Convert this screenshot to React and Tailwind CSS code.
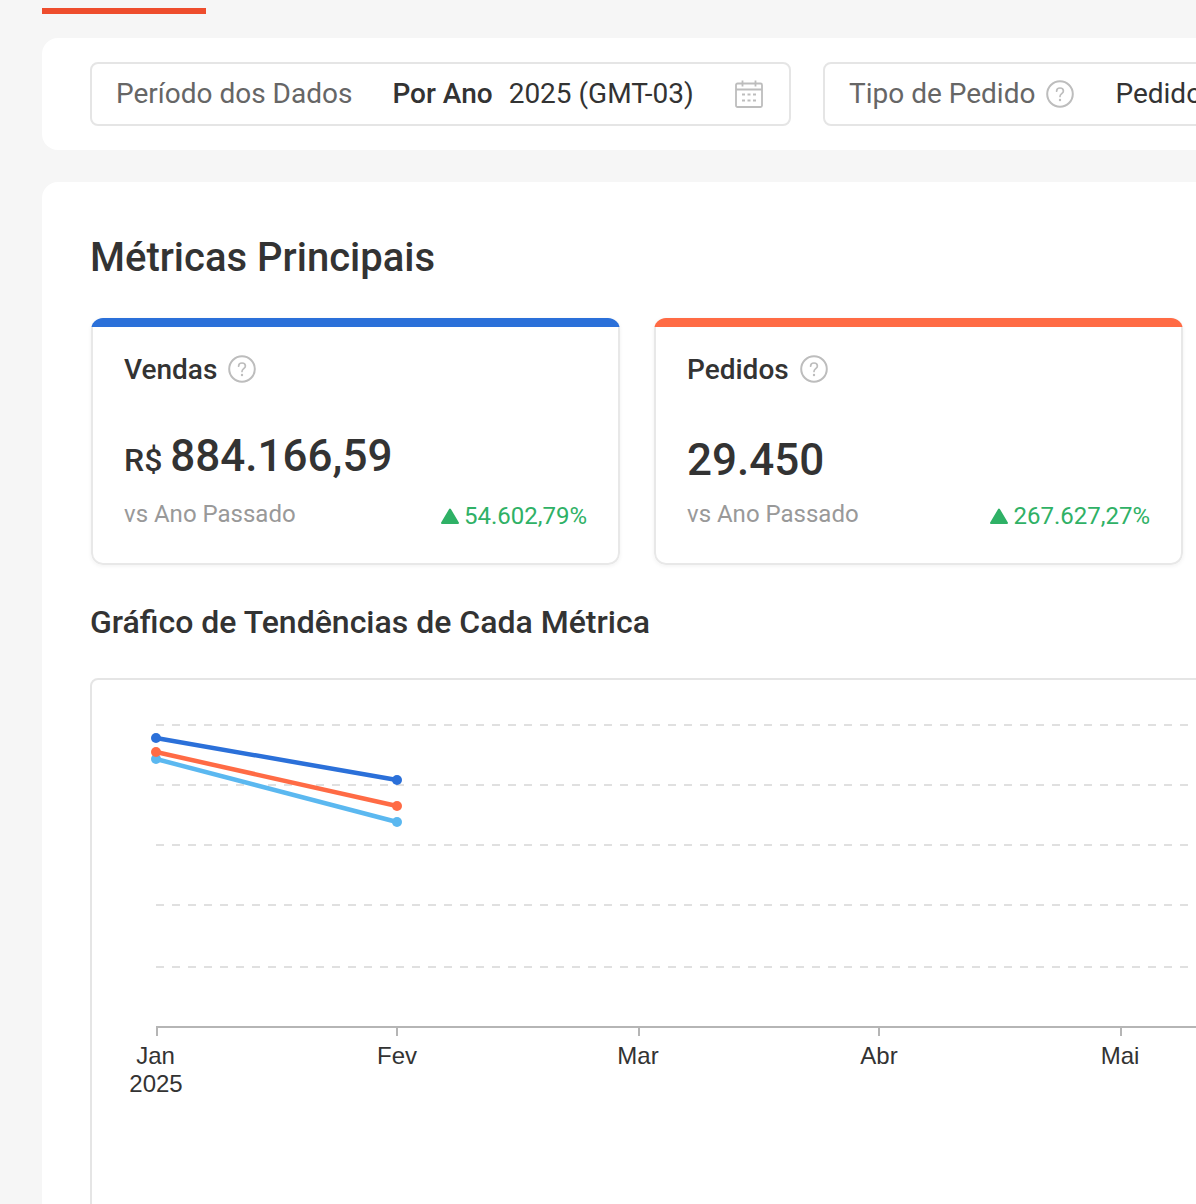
import { Fragment } from 'react'

const gridLines = [725, 785, 845, 905, 967]
const months = [
  { label: 'Jan', x: 157, textX: 155.5 },
  { label: 'Fev', x: 397, textX: 397 },
  { label: 'Mar', x: 639, textX: 638 },
  { label: 'Abr', x: 879, textX: 879 },
  { label: 'Mai', x: 1121, textX: 1120 },
]
const series = [
  { color: '#5bb8f0', y1: 759, y2: 822 },
  { color: '#2b70d9', y1: 738, y2: 780 },
  { color: '#ff6b45', y1: 752, y2: 806 },
]

function HelpIcon() {
  return (
    <svg width="28" height="28" viewBox="0 0 28 28" fill="none" className="shrink-0">
      <circle cx="14" cy="14" r="12.8" stroke="#bdbdbd" strokeWidth="2" />
      <path d="M10.6 11.2c0-1.9 1.5-3.2 3.4-3.2s3.4 1.2 3.4 3c0 2.6-3.4 2.7-3.4 5.4" stroke="#bdbdbd" strokeWidth="1.7" strokeLinecap="round" />
      <circle cx="14" cy="20" r="1.2" fill="#bdbdbd" />
    </svg>
  )
}

function CalendarIcon() {
  return (
    <svg width="28" height="28" viewBox="0 0 28 28" fill="none" className="shrink-0">
      <rect x="1" y="3.5" width="26" height="23.5" rx="1.5" stroke="#bdbdbd" strokeWidth="1.8" />
      <path d="M1 9.5h26M7.5 0.5v6M20.5 0.5v6" stroke="#bdbdbd" strokeWidth="1.8" />
      <path d="M7 14.5h3M12.5 14.5h3M18 14.5h3M7 20.5h3M12.5 20.5h3M18 20.5h3" stroke="#bdbdbd" strokeWidth="1.8" />
    </svg>
  )
}

function MetricCard({ title, accent, value, prefix, delta, valueClass }) {
  return (
    <div className="w-[529px] h-[247px] shrink-0 rounded-xl overflow-hidden flex flex-col bg-white shadow-[0_1px_4px_rgba(0,0,0,0.06)]">
      <div className={`h-[9px] shrink-0 ${accent}`} />
      <div className="flex-1 border-x-2 border-b-2 border-[#e8e8e8] rounded-b-xl px-[31px]">
        <div className="flex items-center gap-[11px] mt-[28px] h-[30px]">
          <span className="text-[28px] font-medium text-[#333333] leading-none">{title}</span>
          <span className="-mt-[2px]"><HelpIcon /></span>
        </div>
        <div className={`flex items-baseline gap-[8px] text-[#333333] font-medium ${valueClass}`}>
          {prefix && <span className="text-[32px]">{prefix}</span>}
          <span className="text-[44px] leading-[56px]">{value}</span>
        </div>
        <div className="flex items-center justify-between mt-[10px]">
          <span className="text-[24px] text-[#999999]">vs Ano Passado</span>
          <span className="flex items-center gap-[5px] text-[24px] text-[#2fb166] mt-[4px]">
            <svg width="18" height="16" viewBox="0 0 18 16" className="shrink-0">
              <path d="M9 1.5 L17 15 H1 Z" fill="#2fb166" stroke="#2fb166" strokeWidth="2" strokeLinejoin="round" />
            </svg>
            {delta}
          </span>
        </div>
      </div>
    </div>
  )
}

export default function App() {
  return (
    <div className="w-[1196px] h-[1204px] overflow-hidden bg-[#f6f6f6] pl-[42px] font-['Roboto',sans-serif]">
      <div className="w-[164px] h-[6px] mt-[8px] bg-[#ee4d2d]" />

      {/* Filters */}
      <div className="w-[1300px] h-[112px] mt-[24px] rounded-2xl bg-white flex items-center gap-[32px] pl-[48px]">
        <div className="w-[701px] h-[64px] shrink-0 rounded-lg border-2 border-[#e5e5e5] flex items-center pl-[24px] pr-[26px] text-[28px]">
          <span className="text-[#666666]">Período dos Dados</span>
          <span className="ml-[40px] font-medium text-[#333333]">Por Ano</span>
          <span className="ml-[16px] text-[#333333]">2025 (GMT-03)</span>
          <span className="ml-auto"><CalendarIcon /></span>
        </div>
        <div className="w-[600px] h-[64px] shrink-0 rounded-lg border-2 border-[#e5e5e5] flex items-center pl-[24px] text-[28px]">
          <span className="text-[#666666]">Tipo de Pedido</span>
          <span className="ml-[11px]"><HelpIcon /></span>
          <span className="ml-[41px] text-[#333333]">Pedidos</span>
        </div>
      </div>

      {/* Main metrics */}
      <div className="w-[1300px] h-[1100px] mt-[32px] rounded-2xl bg-white pl-[48px]">
        <h1 className="pt-[50px] text-[40px] leading-[52px] font-medium text-[#333333]">Métricas Principais</h1>
        <div className="flex gap-[34px] mt-[34px] ml-px">
          <MetricCard title="Vendas" accent="bg-[#2b70d9]" prefix="R$" value="884.166,59" delta="54.602,79%" valueClass="mt-[43px] h-[56px]" />
          <MetricCard title="Pedidos" accent="bg-[#ff6b45]" value="29.450" delta="267.627,27%" valueClass="mt-[47px] h-[52px]" />
        </div>
        <h2 className="mt-[37px] text-[32px] leading-[40px] font-medium text-[#333333]">Gráfico de Tendências de Cada Métrica</h2>

        <div className="w-[1200px] h-[600px] mt-[36px] rounded-lg border-2 border-[#e5e5e5] overflow-hidden">
          <svg width="1106" height="526" viewBox="92 680 1106 526" className="block">
            {gridLines.map(y => (
              <line key={y} x1="156" x2="1196" y1={y} y2={y} stroke="#e0e0e0" strokeWidth="2" strokeDasharray="8 8" />
            ))}
            <line x1="156" x2="1196" y1="1027" y2="1027" stroke="#b5b5b5" strokeWidth="2" />
            {months.map(m => (
              <Fragment key={m.label}>
                <line x1={m.x} x2={m.x} y1="1027" y2="1036" stroke="#b5b5b5" strokeWidth="2" />
                <text x={m.textX} y="1064" textAnchor="middle" fontSize="24" fill="#333333" fontFamily="'Liberation Sans', sans-serif">{m.label}</text>
              </Fragment>
            ))}
            <text x="156" y="1092" textAnchor="middle" fontSize="24" fill="#333333" fontFamily="'Liberation Sans', sans-serif">2025</text>
            {series.map(s => (
              <Fragment key={s.color}>
                <line x1="156" x2="397" y1={s.y1} y2={s.y2} stroke={s.color} strokeWidth="4.5" />
                <circle cx="156" cy={s.y1} r="5" fill={s.color} />
                <circle cx="397" cy={s.y2} r="5" fill={s.color} />
              </Fragment>
            ))}
          </svg>
        </div>
      </div>
    </div>
  )
}
